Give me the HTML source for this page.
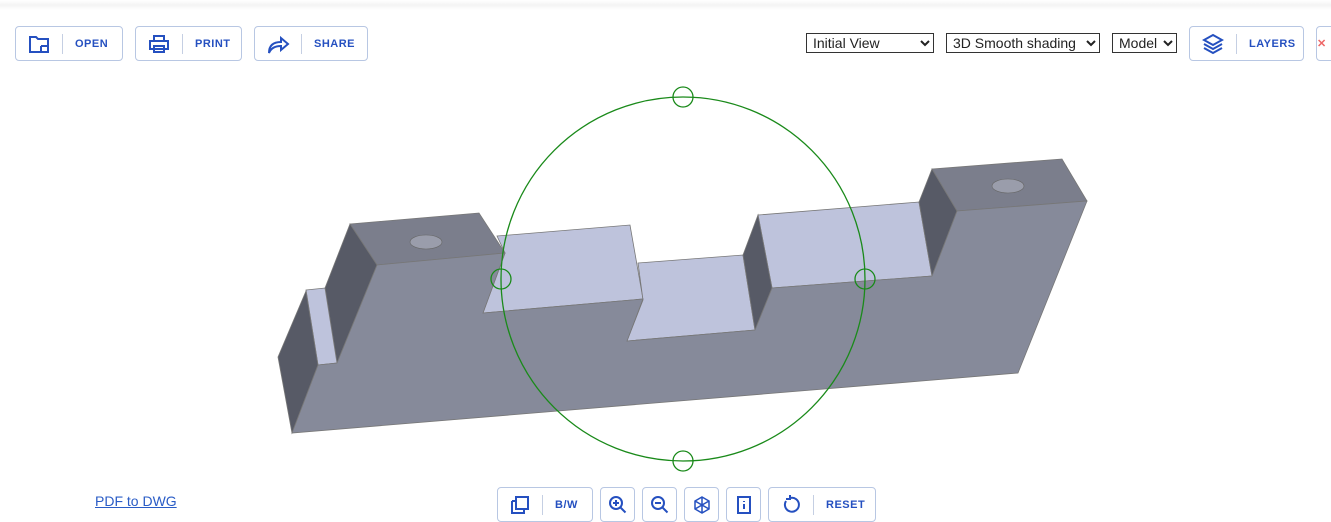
<!DOCTYPE html>
<html><head><meta charset="utf-8"><style>
*{box-sizing:border-box;margin:0;padding:0}
body{width:1331px;height:516px;overflow:hidden;background:#fff;font-family:"Liberation Sans",sans-serif;position:relative}
.topbar{position:absolute;left:0;top:0;width:1331px;height:10px;background:linear-gradient(#fff,#f4f4f4 50%,#fff)}
.btn{position:absolute;height:35px;border:1px solid #b8c7e3;border-radius:4px;background:#fff;display:flex;align-items:center;color:#2550c0;font-size:11px;font-weight:600;letter-spacing:.5px}
.btn .ic{display:flex;align-items:center;justify-content:center}
.btn .sep{width:1px;height:20px;background:#c5cfe3}
.btn svg{stroke:#2550c0;fill:none;stroke-width:2}
select{position:absolute;top:33px;height:20px;font-family:"Liberation Sans",sans-serif;font-size:14px;border:1px solid #333;background:#fff;color:#222;padding-left:2px}
a{position:absolute;left:95px;top:493px;color:#2a5cc6;font-size:14px}
</style></head><body>
<div class="topbar"></div>
<div class="btn" style="left:15px;top:26px;width:108px"><div class="ic" style="width:46px"><svg width="22" height="20" viewBox="0 0 22 20"><path d="M2 3h6l2 2h10v13H2z M13 12h7 M13 12v6"/></svg></div><div class="sep"></div><span style="margin-left:12px">OPEN</span></div>
<div class="btn" style="left:135px;top:26px;width:107px"><div class="ic" style="width:46px"><svg width="22" height="20" viewBox="0 0 22 20"><path d="M6 6V2h10v4 M2 7h18v8H2z M6 12h10v6H6z M9 15h4"/></svg></div><div class="sep"></div><span style="margin-left:12px">PRINT</span></div>
<div class="btn" style="left:254px;top:26px;width:114px"><div class="ic" style="width:46px"><svg width="24" height="20" viewBox="0 0 24 20"><path d="M3 19C3 11 8 8 15 8V4l7 6-7 6v-4C9 12 5 14 3 19z"/></svg></div><div class="sep"></div><span style="margin-left:12px">SHARE</span></div>
<select style="left:806px;width:128px"><option>Initial View</option></select>
<select style="left:946px;width:154px"><option>3D Smooth shading</option></select>
<select style="left:1112px;width:65px"><option>Model</option></select>
<div class="btn" style="left:1189px;top:26px;width:115px"><div class="ic" style="width:46px"><svg width="22" height="22" viewBox="0 0 22 22"><path d="M11 2l9 5-9 5-9-5z M2 11l9 5 9-5 M2 15l9 5 9-5"/></svg></div><div class="sep"></div><span style="margin-left:12px">LAYERS</span></div>
<div class="btn" style="left:1316px;top:26px;width:40px;color:#e66">✕</div>

<svg style="position:absolute;left:0;top:0" width="1331" height="516">
<g stroke="#777" stroke-width="0.8">
<polygon points="497,236 630,225 643,299 483,313 505,253" fill="#bec3dc"/>
<polygon points="638,263 743,255 755,330 627,341 643,300" fill="#bec3dc"/>
<polygon points="758,215 919,202 932,276 772,288" fill="#bec3dc"/>
<polygon points="758,215 772,288 755,330 743,255" fill="#575a66"/>
<polygon points="932,169 957,211 932,276 919,202" fill="#575a66"/>
<polygon points="932,169 1062,159 1087,201 957,211" fill="#7b7e8c"/>
<polygon points="350,224 479,213 505,253 377,265" fill="#7b7e8c"/>
<polygon points="350,224 377,265 337,363 325,288" fill="#575a66"/>
<polygon points="306,290 325,288 337,363 318,365" fill="#bec3dc"/>
<polygon points="306,291 278,357 292,433 318,365" fill="#575a66"/>
<polygon points="292,433 318,365 337,363 377,265 505,253 483,313 643,299 627,341 755,330 772,288 932,276 957,211 1087,201 1018,373" fill="#868a9a"/>
</g>
<ellipse cx="426" cy="242" rx="16" ry="7" fill="#9a9dab" stroke="#666" stroke-width=".6"/>
<ellipse cx="1008" cy="186" rx="16" ry="7" fill="#9a9dab" stroke="#666" stroke-width=".6"/>
<g fill="none" stroke="#1a8a1a" stroke-width="1.3">
<circle cx="683" cy="279" r="182"/>
<circle cx="683" cy="97" r="10"/><circle cx="683" cy="461" r="10"/>
<circle cx="501" cy="279" r="10"/><circle cx="865" cy="279" r="10"/>
</g>
</svg>

<a href="#">PDF to DWG</a>
<div class="btn" style="left:497px;top:487px;width:96px"><div class="ic" style="width:44px"><svg width="20" height="20" viewBox="0 0 20 20"><path d="M6 2h12v12H6z M2 6h4 M2 6v12h12v-4"/></svg></div><div class="sep"></div><span style="margin-left:12px">B/W</span></div>
<div class="btn" style="left:600px;top:487px;width:35px"><div class="ic" style="width:33px"><svg width="20" height="20" viewBox="0 0 20 20"><circle cx="8" cy="8" r="6"/><path d="M12.5 12.5l5 5 M8 5v6 M5 8h6"/></svg></div></div>
<div class="btn" style="left:642px;top:487px;width:35px"><div class="ic" style="width:33px"><svg width="20" height="20" viewBox="0 0 20 20"><circle cx="8" cy="8" r="6"/><path d="M12.5 12.5l5 5 M5 8h6"/></svg></div></div>
<div class="btn" style="left:684px;top:487px;width:35px"><div class="ic" style="width:33px"><svg width="20" height="20" viewBox="0 0 20 20" style="stroke-width:1.5"><path d="M10 2l7 4v8l-7 4-7-4V6z M3 6l14 8 M17 6L3 14 M10 2v16"/></svg></div></div>
<div class="btn" style="left:726px;top:487px;width:35px"><div class="ic" style="width:33px"><svg width="20" height="20" viewBox="0 0 20 20"><path d="M4 2h12v16H4z M10 6v1 M10 9v5"/></svg></div></div>
<div class="btn" style="left:768px;top:487px;width:108px"><div class="ic" style="width:44px"><svg width="20" height="20" viewBox="0 0 20 20"><path d="M5 6a7 7 0 1 0 4-3 M9 0v4H5"/></svg></div><div class="sep"></div><span style="margin-left:12px">RESET</span></div>
</body></html>
